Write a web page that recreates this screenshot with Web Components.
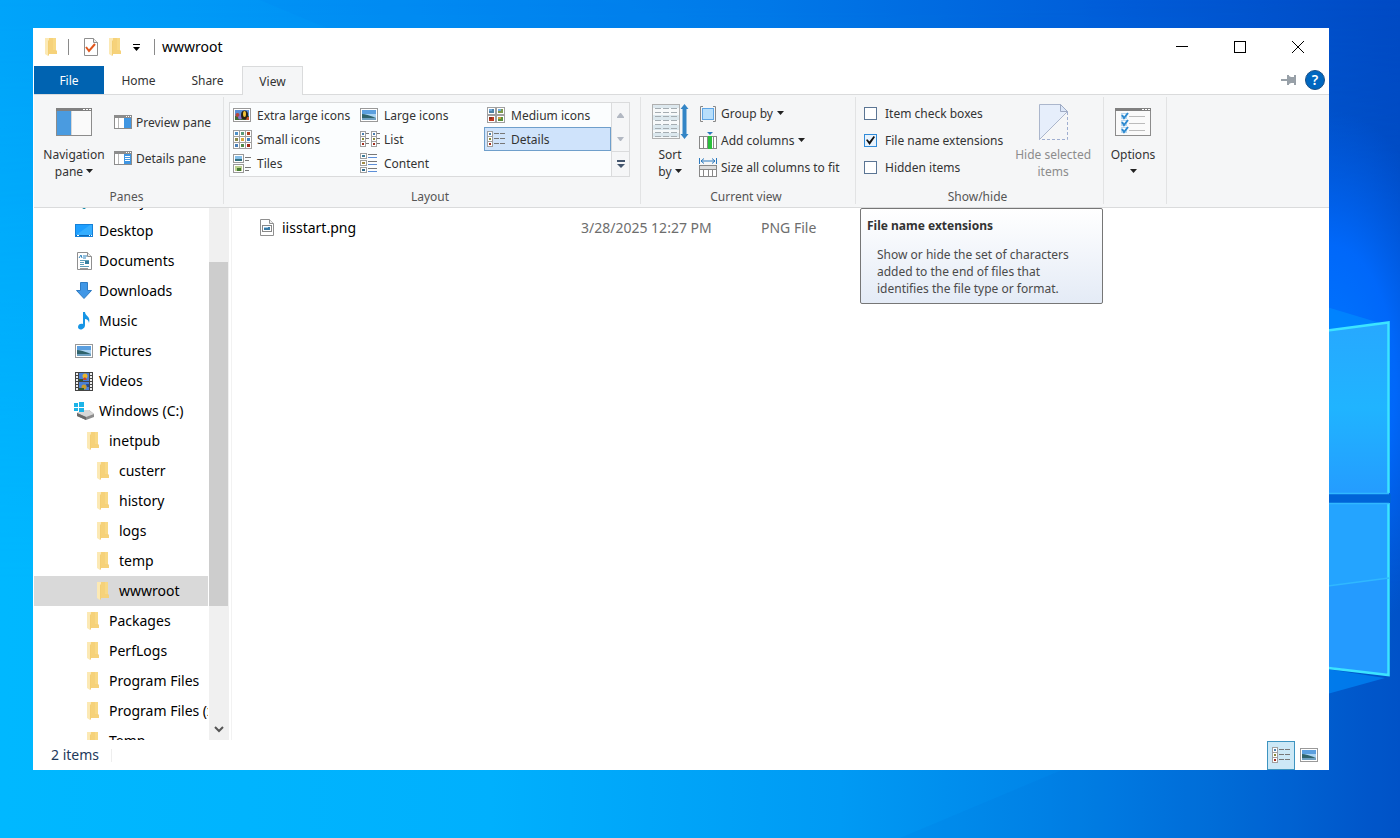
<!DOCTYPE html>
<html lang="en">
<head>
<meta charset="utf-8">
<title>wwwroot</title>
<style>
  html, body { margin: 0; height: 100%; }
  body { font: 12px/17px "Noto Sans", "Open Sans", sans-serif; color: #333; }
</style>
</head>
<body>
<desktop-wallpaper>
  <explorer-window>
    <title-bar slot="title">wwwroot</title-bar>
    <ribbon-tabs slot="tabs"></ribbon-tabs>
    <ribbon-panel slot="ribbon">
      <ribbon-group label="Panes" style="--width:189px">
        <big-command icon="navpane" arrow style="--width:80px">Navigation pane</big-command>
        <command-stack rows="2">
          <small-command icon="preview">Preview pane</small-command>
          <small-command icon="detailspane">Details pane</small-command>
        </command-stack>
      </ribbon-group>
      <ribbon-group label="Layout" style="--width:416px">
        <layout-gallery>
          <gallery-item icon="xlarge">Extra large icons</gallery-item>
          <gallery-item icon="picture">Large icons</gallery-item>
          <gallery-item icon="medium">Medium icons</gallery-item>
          <gallery-item icon="small">Small icons</gallery-item>
          <gallery-item icon="list">List</gallery-item>
          <gallery-item icon="details" selected>Details</gallery-item>
          <gallery-item icon="tiles">Tiles</gallery-item>
          <gallery-item icon="content">Content</gallery-item>
        </layout-gallery>
      </ribbon-group>
      <ribbon-group label="Current view" style="--width:214px">
        <big-command icon="sort" arrow style="--width:58px;--text:36px">Sort by</big-command>
        <command-stack rows="3">
          <small-command icon="group" arrow>Group by</small-command>
          <small-command icon="addcol" arrow>Add columns</small-command>
          <small-command icon="sizecol">Size all columns to fit</small-command>
        </command-stack>
      </ribbon-group>
      <ribbon-group label="Show/hide" style="--width:247px">
        <command-stack rows="3" style="--indent:8px">
          <check-command>Item check boxes</check-command>
          <check-command checked>File name extensions</check-command>
          <check-command>Hidden items</check-command>
        </command-stack>
        <big-command icon="hide" disabled style="--width:100px">Hide selected items</big-command>
        <tool-tip slot="tip" heading="File name extensions">Show or hide the set of characters added to the end of files that identifies the file type or format.</tool-tip>
      </ribbon-group>
      <ribbon-group label="" style="--width:62px">
        <big-command icon="options" arrow style="--width:58px;--text:48px">Options</big-command>
      </ribbon-group>
    </ribbon-panel>
    <nav-tree slot="nav">
      <tree-item icon="objects" level="1">3D Objects</tree-item>
      <tree-item icon="desktop" level="1">Desktop</tree-item>
      <tree-item icon="documents" level="1">Documents</tree-item>
      <tree-item icon="downloads" level="1">Downloads</tree-item>
      <tree-item icon="music" level="1">Music</tree-item>
      <tree-item icon="picture" level="1">Pictures</tree-item>
      <tree-item icon="videos" level="1">Videos</tree-item>
      <tree-item icon="drive" level="1">Windows (C:)</tree-item>
      <tree-item icon="folder" level="2">inetpub</tree-item>
      <tree-item icon="folder" level="3">custerr</tree-item>
      <tree-item icon="folder" level="3">history</tree-item>
      <tree-item icon="folder" level="3">logs</tree-item>
      <tree-item icon="folder" level="3">temp</tree-item>
      <tree-item icon="folder" level="3" selected>wwwroot</tree-item>
      <tree-item icon="folder" level="2">Packages</tree-item>
      <tree-item icon="folder" level="2">PerfLogs</tree-item>
      <tree-item icon="folder" level="2">Program Files</tree-item>
      <tree-item icon="folder" level="2">Program Files (x86)</tree-item>
      <tree-item icon="folder" level="2">Temp</tree-item>
    </nav-tree>
    <file-list slot="files"></file-list>
    <status-bar slot="status">2 items</status-bar>
  </explorer-window>
</desktop-wallpaper>

<script>
const svg = (w, h, body) => `<svg width="${w}" height="${h}" viewBox="0 0 ${w} ${h}" aria-hidden="true">${body}</svg>`;
const rect = (x, y, w, h, fill, extra = '') => `<rect x="${x}" y="${y}" width="${w}" height="${h}" fill="${fill}" ${extra}/>`;
const frame = (x, y, w, h, stroke = '#999', fill = '#fff') => rect(x + .5, y + .5, w - 1, h - 1, fill, `stroke="${stroke}"`);
const landscape = (x, y, w, h) =>
  rect(x, y, w, h, '#a9d3f3') + rect(x, y, w, Math.ceil(h / 3), '#5b9fdf') +
  `<path d="M${x} ${y + h * .4}q${w * .3} 0 ${w} ${h * .4}v${h * .15}h-${w}z" fill="#2f636c"/>` +
  rect(x, y + h - 2, w, 2, '#6e9fc0');
const miniPic = (x, y, color, sky = '#70a9dc') => frame(x, y, 9, 8, '#a0a0a0') + rect(x + 2, y + 2, 5, 4, color) + rect(x + 2, y + 2, 3, 2, sky);
const paneWindow = inner => frame(0, 2, 18, 14, '#8c8c8c') + rect(0, 2, 18, 3, '#8c8c8c') +
  rect(12, 3, 1, 1, '#fff') + rect(14, 3, 1, 1, '#fff') + rect(16, 3, 1, 1, '#fff') + rect(4, 5, 1, 10, '#b8b8b8') + inner;
const bigWindow = inner => frame(0, 4, 36, 28, '#8c8c8c', '#fafafa') + rect(0, 4, 36, 3, '#808080') +
  rect(27, 5, 2, 1, '#fff') + rect(30, 5, 2, 1, '#fff') + rect(33, 5, 2, 1, '#fff') + inner;
const sheet = (x, y, w, h) => `<path d="M${x + .5} ${y + .5}h${w - 5}l4 4v${h - 5}h-${w - 1}z" fill="#fff" stroke="#8f8f8f"/><path d="M${x + w - 4.5} ${y + .5}v4h4" fill="#eee" stroke="#8f8f8f"/>`;

const ICONS = {
  folder: svg(18, 18, '<path d="M5 0h8v12l1 1v3H5z" fill="#f6d27a"/><path d="M10 0h3v12h-3z" fill="#f8d985"/><path d="M2 0h4v16l-1 2-3-2z" fill="#fce9b4"/><path d="M5 3l1-1v15l-1 1z" fill="#f3cf74"/>'),
  objects: svg(18, 18, '<path d="M9 1l7 3v9l-7 4-7-4V4z" fill="#52c3de"/><path d="M9 8v9l7-4V4z" fill="#1791b8"/><path d="M2 13l7 4 7-4-7-1z" fill="#0f7f9d"/>'),
  desktop: svg(18, 18, rect(0, 2, 18, 13, '#1681d8') + rect(1, 3, 16, 10, '#1e9fff') + '<path d="M1 13L15 3h2v10z" fill="#35aeff"/>' + rect(1, 13, 16, 1, '#0f69b7') + rect(2, 13, 2, 1, '#fff') + rect(14, 13, 1, 1, '#fff') + rect(16, 13, 1, 1, '#fff')),
  documents: svg(18, 18, sheet(2, 0, 15, 18) + '<path d="M4 6l2-3 1 3M8 4h4M8 6h3" stroke="#2f83bd" fill="none"/>' + [8, 10, 12, 14].map(y => rect(5, y, 9, 1, '#5e9fba')).join('') + rect(9, 9, 5, 4, '#fff') + rect(10, 9, 4, 3, '#347ea0') + rect(5, 16, 8, 1, '#999')),
  downloads: svg(18, 18, '<path d="M5.500 .5h7v8h4L9 16.500 1.500 8.500h4z" fill="#4197e6" stroke="#2f7cc4"/>'),
  music: svg(18, 18, '<path d="M8 0h2c0 4 6 4 4 11-.5-3-2-4-4-4v6c0 5-7 6-7 2 0-3 3-4 5-3z" fill="#1695e5"/>'),
  picture: svg(18, 18, frame(0, 2, 18, 14, '#999') + landscape(2, 4, 14, 10)),
  videos: svg(18, 19, rect(0, 0, 18, 19, '#444') + [1, 4, 7, 10, 13, 16].map(y => rect(1, y, 2, 2, '#eee') + rect(15, y, 2, 2, '#eee')).join('') + rect(4, 1, 10, 8, '#4a7fd5') + rect(4, 10, 10, 8, '#4a7fd5') + '<circle cx="10" cy="4" r="2.500" fill="#e8b52d"/><path d="M7 8l3-3 2 3z" fill="#c4402d"/><path d="M4 7h4v2H4z" fill="#2f5b35"/><circle cx="9" cy="15" r="2.500" fill="#c79c2c"/><path d="M4 16h5v2H4z" fill="#2f5b35"/><path d="M11 12h3v3h-2z" fill="#274a8a"/>'),
  drive: svg(20, 18, '<path d="M2 11l6-3h6l5 4v3l-8 3-9-4z" fill="#8c8c8c"/><path d="M2 11l6-3h6l5 4-8 3z" fill="#d7d7d7"/><path d="M2 11l9 4v3l-9-4z" fill="#6a6a6a"/>' + rect(-1, 1, 4, 4, '#1cb4e8') + rect(4, 0, 5, 5, '#1cb4e8') + rect(-1, 6, 4, 3, '#1cb4e8') + rect(4, 6, 5, 4, '#1cb4e8')),
  check: svg(16, 18, sheet(1, 0, 14, 18) + '<path d="M3 9l3 4 6-7" fill="none" stroke="#e0561c" stroke-width="2"/>'),
  file: svg(15, 18, sheet(0, 0, 14, 17) + frame(2, 6, 10, 7, '#888') + rect(4, 8, 6, 3, '#3a7ba6') + rect(4, 8, 4, 1, '#9cc9ea')),
  html: svg(15, 18, rect(3, 13, 8, 4, '#1b76b5')),
  navpane: svg(36, 36, bigWindow(rect(1, 7, 14, 24, '#4a9be0') + rect(15, 7, 1, 24, '#d7d7d7'))),
  preview: svg(18, 18, paneWindow(rect(10, 5, 7, 10, '#4096e2'))),
  detailspane: svg(18, 18, paneWindow(rect(10, 5, 7, 10, '#4096e2') + [7, 9, 11].map(y => rect(11, y, 5, 1, '#fff')).join(''))),
  xlarge: svg(18, 18, frame(0, 2, 18, 14) + rect(2, 4, 14, 10, '#5b8fd8') + rect(2, 10, 14, 4, '#3f6b38') + '<circle cx="4.500" cy="9" r="2" fill="#b7443c"/><circle cx="7" cy="11.500" r="2" fill="#8b70d0"/><ellipse cx="11.500" cy="9" rx="3.500" ry="4.500" fill="#2a2216"/><ellipse cx="11.500" cy="8" rx="1.500" ry="3" fill="#f0c33a"/><path d="M14 11h2v3h-3z" fill="#c4522d"/>'),
  medium: svg(18, 18, miniPic(0, 1, '#4d84a8') + miniPic(9, 1, '#7d9a4a') + miniPic(0, 9, '#c03a20', '#90301c') + miniPic(9, 9, '#5d8f3a', '#c8a040')),
  small: svg(19, 19, [0, 1, 2].map(r => [0, 1, 2].map(c => frame(c * 6, r * 6, 7, 7, '#a0a0a0') + rect(c * 6 + 2, r * 6 + 2, 3, 3, [['#4d90c8', '#5a9a78', '#b04020'], ['#8a8a4a', '#d8a840', '#4080c0'], ['#4a80b8', '#508a48', '#a02818']][r][c])).join('')).join('')),
  list: svg(20, 18, [0, 11].map(x => [0, 5, 10].map((y, i) => frame(x, y + 1, 6, 6, '#a0a0a0') + rect(x + 2, y + 3, 2, 2, ['#4a80b0', '#8a8a3a', '#a03020'][i]) + rect(x + 6, y + 3, 3, 1, '#777')).join('')).join('')),
  details: svg(18, 18, [0, 5, 10].map((y, i) => frame(0, y + 1, 6, 6, '#a0a0a0') + rect(2, y + 3, 2, 2, ['#4a80b0', '#8a8a3a', '#a03020'][i]) + rect(7, y + 3, 5, 1, '#777') + rect(13, y + 3, 5, 1, '#777')).join('')),
  tiles: svg(18, 19, frame(0, 0, 11, 9) + rect(2, 2, 7, 5, '#86bfe8') + rect(2, 5, 7, 2, '#33707f') + frame(0, 10, 11, 9) + rect(2, 12, 7, 5, '#bcd090') + rect(4, 14, 4, 3, '#467b31') + rect(12, 3, 6, 1, '#777') + rect(12, 6, 4, 1, '#777') + rect(12, 13, 6, 1, '#777') + rect(12, 16, 4, 1, '#777')),
  content: svg(18, 20, [0, 7, 14].map((y, i) => frame(0, y, 7, 6, '#a0a0a0') + rect(2, y + 2, 3, 2, ['#3e7c99', '#a08b45', '#2f6b8c'][i]) + rect(8, y + 1, 9, 1, '#777') + rect(8, y + 4, 9, 1, '#5d8fd8')).join('')),
  sort: svg(36, 36, frame(0, 0, 28, 35, '#b0b0b0', '#f7f9fa') + rect(1, 1, 26, 3, '#dde8ee') + [[11, 5], [21, 5], [29, 4]].map(([y, h]) => rect(1, y, 26, h, '#dce8ee')).join('') + [4, 8, 12, 16, 20, 24, 28, 32].map(y => rect(3, y, 6, 1, '#a5adb2') + rect(11, y, 6, 1, '#a5adb2') + rect(19, y, 6, 1, '#a5adb2')).join('') + '<path d="M32.500 0l4 5h-2v25h2l-4 5-4-5h2V5h-2z" fill="#3385c6"/>'),
  group: svg(18, 18, '<path d="M4 1.500H1.500v15H4M14 1.500h2.500v15H14" fill="none" stroke="#888"/>' + frame(3, 3, 12, 12, '#5fa5e4', '#b8dffb')),
  addcol: svg(18, 18, '<path d="M8 0h6l-3 3z" fill="#2b78bd"/>' + frame(0, 4, 18, 13, '#888') + rect(4, 5, 1, 11, '#888') + rect(9, 4, 4, 13, '#2bbf3c') + rect(8, 5, 1, 11, '#888') + rect(14, 5, 1, 11, '#888')),
  sizecol: svg(18, 19, '<path d="M.5 0v6M17.500 0v6M2 3h14M5 .5L2 3l3 2.500M13 .5L16 3l-3 2.500" fill="none" stroke="#2b78bd"/>' + frame(0, 7, 18, 12, '#888') + rect(1, 8, 16, 3, '#ddd') + rect(1, 11, 16, 1, '#888') + [4, 9, 13].map(x => rect(x, 12, 1, 6, '#888')).join('')),
  hide: svg(36, 36, '<path d="M4.500 .5h22v6h6L4.500 35.500z" fill="#e6eefb"/><path d="M4.500 35.500V.5h21l7 7-28 28" fill="none" stroke="#abb6cc"/><path d="M25.500 .5v7h7z" fill="#dce7f8" stroke="#9fabc4"/><path d="M32.500 8v27.500H4.500" fill="none" stroke="#9faed0" stroke-dasharray="3 2"/>'),
  options: svg(36, 36, bigWindow([9, 16, 23].map(y => frame(6, y, 6, 6, '#b9d8f0') + `<path d="M7 ${y + 2}l2 3 4-5" fill="none" stroke="#2d8ad0" stroke-width="2"/>` + rect(14, y + 3, 16, 1, '#bbb')).join(''))),
  pin: svg(16, 12, '<path d="M0 5h6v2H0zM6 1h2v1l2 1h3V1h2v10h-2V9h-3l-2 1v1H6z" fill="#98a0a8"/>'),
  arrow: svg(7, 4, '<path d="M0 0h7L3.500 4z" fill="#222"/>'),
  minimize: svg(12, 12, rect(0, 5, 12, 1, '#000')),
  maximize: svg(12, 12, frame(0, 0, 12, 12, '#000', 'none')),
  close: svg(12, 12, '<path d="M0 0l12 12M12 0L0 12" stroke="#000"/>'),
  quick: svg(8, 8, rect(0, 1, 7, 1, '#000') + '<path d="M0 4h7L3.500 8z" fill="#000"/>'),
  up: svg(7, 5, '<path d="M0 5h7V4L4 0H3L0 4z" fill="#b2b8c2"/>'),
  down: svg(7, 4, '<path d="M0 0h7L4 4H3z" fill="#b2b8c2"/>'),
  more: svg(8, 8, rect(0, 0, 8, 2, '#44566e') + '<path d="M0 4h8L4 8z" fill="#44566e"/>'),
  chevron: svg(10, 8, '<path d="M1 1l4 4 4-4" fill="none" stroke="#555" stroke-width="2"/>')
};

/* Registers an element whose shadow root is built once from its CSS and markup. */
function define(name, css, markup) {
  customElements.define(name, class extends HTMLElement {
    connectedCallback() {
      if (this.shadowRoot) return;
      const t = document.createElement('template');
      t.innerHTML = `<style>:host,*{box-sizing:border-box}button{font:inherit;color:inherit;background:none;border:0;padding:0;margin:0;text-align:left}svg{display:block;flex:none;overflow:visible}${css}</style>${markup(this)}`;
      this.attachShadow({ mode: 'open' }).append(t.content.cloneNode(true));
    }
  });
}
const arrowIf = el => el.hasAttribute('arrow') ? `<span class="arrow">${ICONS.arrow}</span>` : '';

define('desktop-wallpaper', `
  :host{display:grid;position:relative;min-height:100vh;padding:28px 71px 68px 33px;overflow:hidden;background:#0078e8}
  .art{position:absolute;inset:0;width:100%;height:100%}
  ::slotted(*){position:relative}`,
  () => `<svg class="art" viewBox="0 0 1400 838" preserveAspectRatio="xMaxYMid slice" aria-hidden="true">
    <defs>
      <linearGradient id="base" x1="0" y1="0" x2="1400" y2="0" gradientUnits="userSpaceOnUse">
        <stop offset="0" stop-color="#00a4fa"/><stop offset=".25" stop-color="#0090f4"/><stop offset=".55" stop-color="#0078e8"/><stop offset=".8" stop-color="#005cd8"/><stop offset="1" stop-color="#004ac4"/>
      </linearGradient>
      <linearGradient id="floor" x1="0" y1="0" x2="1400" y2="0" gradientUnits="userSpaceOnUse">
        <stop offset="0" stop-color="#00b8ff"/><stop offset=".35" stop-color="#00b0fd"/><stop offset=".6" stop-color="#009af4"/><stop offset=".75" stop-color="#0084e8"/><stop offset=".88" stop-color="#006cd8"/><stop offset="1" stop-color="#0052c8"/>
      </linearGradient>
      <linearGradient id="fade" x1="0" y1="0" x2="0" y2="838" gradientUnits="userSpaceOnUse">
        <stop offset="0" stop-color="#fff" stop-opacity="0"/><stop offset=".7" stop-color="#fff"/>
      </linearGradient>
      <mask id="low"><rect width="1400" height="838" fill="url(#fade)"/></mask>
      <radialGradient id="glow"><stop offset="0" stop-color="#0078ff"/><stop offset=".5" stop-color="#006aff" stop-opacity=".9"/><stop offset="1" stop-color="#0060f0" stop-opacity="0"/></radialGradient>
      <linearGradient id="pane" x1="0" y1="0" x2="0" y2="1"><stop offset="0" stop-color="#27a8ff"/><stop offset=".5" stop-color="#20b4ff"/><stop offset="1" stop-color="#249cff"/></linearGradient>
    </defs>
    <rect width="1400" height="838" fill="url(#base)"/>
    <rect width="1400" height="838" fill="url(#floor)" mask="url(#low)"/>
    <path d="M260 0h340L760 50H380z" fill="#0080f0" opacity=".15"/>
    <path d="M900 838L1300 670l100 0v168z" fill="#0050c8" opacity=".07"/>
    <ellipse cx="1330" cy="380" rx="130" ry="270" fill="url(#glow)"/>
    <path d="M1320 305l60 18-60 8zM1320 668l65 10-65 18z" fill="#0090ff" opacity=".6"/>
    <path d="M1320 331l69-9v172h-69z" fill="url(#pane)"/>
    <path d="M1320 503h69v172l-69-9z" fill="#249bff"/>
    <path d="M1320 503h69v75l-69 9z" fill="#24a4ff"/>
    <path d="M1320 494h71v9h-71z" fill="#0064d8"/>
    <path d="M1320 331.500l68.500-9V493M1388.500 503v172l-68.500-8" fill="none" stroke="#3ce4ff" stroke-width="2.500"/>
    <path d="M1320 493.500h69M1320 503.500h69M1320 587l69-9" fill="none" stroke="#30b8ff" stroke-width="1.500"/>
  </svg><slot></slot>`);

define('explorer-window', `
  :host{display:grid;grid-template-rows:auto auto auto minmax(0,1fr) auto;background:#fff;padding-left:1px;min-width:0}
  .body{display:flex;min-height:0;overflow:hidden;contain:size}
  ::slotted([slot=files]){flex:1}
  ::slotted([slot=ribbon]){z-index:1}`,
  () => `<slot name="title"></slot><slot name="tabs"></slot><slot name="ribbon"></slot>
    <main class="body"><slot name="nav"></slot><slot name="files"></slot></main><slot name="status"></slot>`);

define('title-bar', `
  :host{display:flex;align-items:center;height:38px;padding:0 2px 0 9px;color:#000;font-size:14px;line-height:20px}
  .rule{width:1px;height:16px;background:#8a8a8a}
  .first{margin:0 14px 0 7px}.last{margin:0 7px 0 13px}
  .folder,.menu{margin-left:8px}
  .controls{display:flex;margin-left:auto}
  .controls button{display:grid;place-items:center;width:58px;height:38px}`,
  () => `${ICONS.folder}<span class="rule first"></span>
    <button aria-label="Properties">${ICONS.check}</button>
    <button class="folder" aria-label="New folder">${ICONS.folder}</button>
    <button class="menu" aria-label="Customize toolbar">${ICONS.quick}</button>
    <span class="rule last"></span><slot></slot>
    <div class="controls"><button aria-label="Minimize">${ICONS.minimize}</button><button aria-label="Maximize">${ICONS.maximize}</button><button aria-label="Close">${ICONS.close}</button></div>`);

define('ribbon-tabs', `
  :host{display:flex;align-items:stretch;height:29px;border-bottom:1px solid #dadbdc}
  .tab{width:69px;text-align:center}
  .file{width:70px;background:#0063b1;color:#fff}
  .on{width:61px;background:#f5f6f7;border:1px solid #dadbdc;border-bottom:0;margin-bottom:-1px}
  .tools{display:flex;align-items:center;gap:8px;margin-left:auto;padding-right:4px}
  .help{width:20px;height:20px;border-radius:50%;background:#0067c0;border:1px solid #1a4f86;color:#fff;font-size:14px;font-weight:600;line-height:18px;text-align:center}`,
  () => `<button class="tab file">File</button><button class="tab">Home</button><button class="tab">Share</button><button class="tab on">View</button>
    <div class="tools"><button aria-label="Pin the ribbon">${ICONS.pin}</button><button class="help">?</button></div>`);

define('ribbon-panel', `
  :host{display:flex;background:#f5f6f7;border-bottom:1px solid #dadbdc}
  ::slotted(*){flex:none}`, () => `<slot></slot>`);

define('ribbon-group', `
  :host{display:flex;flex-direction:column;position:relative;box-sizing:content-box;width:var(--width);margin:2px 0 3px;border-right:1px solid #e2e3e4}
  .body{display:flex;height:92px}
  .label{height:15px;line-height:15px;text-align:center;color:#555;padding-right:4px}`,
  el => `<div class="body"><slot></slot></div><div class="label">${el.getAttribute('label')}</div><slot name="tip"></slot>`);

define('big-command', `
  :host{display:block;width:var(--width);padding-top:7px}
  button{display:flex;flex-direction:column;align-items:center;gap:6px;width:100%}
  button:disabled{color:#8c8c8c}
  .text{text-align:center;max-width:var(--text,82px)}
  .arrow{display:inline-block;vertical-align:middle;padding-bottom:3px}`,
  el => `<button ${el.hasAttribute('disabled') ? 'disabled' : ''}>${ICONS[el.getAttribute('icon')]}<span class="text"><slot></slot>${el.hasAttribute('arrow') ? ' ' : ''}${arrowIf(el)}</span></button>`);

define('command-stack', `
  :host{display:flex;flex-direction:column;padding:3px 0 0 var(--indent,0)}
  :host([rows="2"]){padding-top:7px}
  :host([rows="2"]) ::slotted(*){height:36px}
  ::slotted(*){height:27px}`, () => `<slot></slot>`);

define('small-command', `
  :host{display:flex}
  button{display:flex;align-items:center;gap:4px;white-space:nowrap}
  .arrow{padding-bottom:2px}`,
  el => `<button>${ICONS[el.getAttribute('icon')]}<slot></slot>${arrowIf(el)}</button>`);

define('check-command', `
  :host{display:flex}
  label{display:flex;align-items:center;gap:8px;white-space:nowrap}
  input{appearance:none;display:grid;place-items:center;width:13px;height:13px;margin:0;border:1px solid #5b7594;background:#fff}
  input:checked{border-color:#2f8ad8;background:#e8f3fd}
  input:checked::before{content:"";width:9px;height:9px;background:#111;clip-path:polygon(0 45%,15% 35%,38% 62%,85% 0,100% 12%,40% 100%)}`,
  el => `<label><input type="checkbox" ${el.hasAttribute('checked') ? 'checked' : ''}><slot></slot></label>`);

define('layout-gallery', `
  :host{display:flex;margin:5px 0 0 5px;height:75px}
  .grid{display:grid;grid-template-columns:repeat(3,127px);grid-template-rows:repeat(3,24px);background:#fbfdfe;border:1px solid #dadbdc}
  .side{display:grid;grid-template-rows:24px 24px 25px;width:18px;border:1px solid #dadbdc;border-left:0}
  .side button{display:grid;place-items:center}
  .side button:last-child{border-top:1px solid #dadbdc}`,
  () => `<div class="grid"><slot></slot></div><div class="side"><button aria-label="Scroll up" disabled>${ICONS.up}</button><button aria-label="Scroll down" disabled>${ICONS.down}</button><button aria-label="More layouts">${ICONS.more}</button></div>`);

define('gallery-item', `
  :host{display:block}
  button{display:flex;align-items:center;width:100%;height:24px;padding-left:2px;border:1px solid transparent;white-space:nowrap}
  .icon{width:24px}
  :host([selected]) button{background:#cfe3fb;border-color:#6f9fcb}`,
  el => `<button aria-pressed="${el.hasAttribute('selected')}"><span class="icon">${ICONS[el.getAttribute('icon')]}</span><slot></slot></button>`);

define('tool-tip', `
  :host{display:block;position:absolute;z-index:5;top:111px;left:4px;width:243px;padding:8px 16px 6px 16px;border:1px solid #767676;border-radius:2px;background:linear-gradient(#fff,#e4ebf6);color:#4a4a4a}
  b{display:block;margin:0 0 12px -10px;color:#333}`,
  el => `<b>${el.getAttribute('heading')}</b><slot></slot>`);

define('nav-tree', `
  :host{display:flex;width:198px;border-right:1px solid #f2f2f2;color:#000;font-size:14px;line-height:20px}
  nav{width:174px;overflow:hidden}
  .rows{margin-top:-22px}
  .bar{display:grid;grid-template-rows:54fr 344fr 134fr;width:20px;margin-left:1px;background:#f0f0f0}
  .thumb{background:#cdcdcd;margin-right:1px}
  .after{display:flex;align-items:flex-end;justify-content:center;padding:0 1px 6px 0}`,
  () => `<nav><div class="rows"><slot></slot></div></nav><div class="bar"><span></span><span class="thumb"></span><span class="after">${ICONS.chevron}</span></div>`);

define('tree-item', `
  :host{display:block}
  a{display:flex;align-items:center;height:30px;padding-left:41px;color:inherit;text-decoration:none;white-space:nowrap}
  :host([level="2"]) a{padding-left:51px}
  :host([level="3"]) a{padding-left:61px}
  :host([selected]) a{background:#d9d9d9}
  .icon{width:24px;flex:none}`,
  el => `<a href="#"><span class="icon">${ICONS[el.getAttribute('icon')]}</span><slot></slot></a>`);

define('file-list', `
  :host{display:block;overflow:hidden;color:#6d6d6d;font-size:14px;line-height:20px}
  table{width:100%;table-layout:fixed;border-collapse:collapse;margin-top:-25px}
  td{height:30px;padding:0;white-space:nowrap}
  .name{width:349px}.date{width:180px}
  .name div{display:flex;align-items:center;gap:7px;padding-left:28px;color:#000}`,
  () => `<table aria-label="Files">
    <tr><td class="name"><div>${ICONS.html}</div></td><td class="date"></td><td></td></tr>
    <tr><td class="name"><div>${ICONS.file}iisstart.png</div></td><td class="date">3/28/2025 12:27 PM</td><td>PNG File</td></tr></table>`);

define('status-bar', `
  :host{display:flex;align-items:center;height:30px;padding:0 11px 0 17px;color:#1e395b;font-size:14px;line-height:20px}
  .rule{width:1px;height:13px;margin-left:12px;background:#eee}
  .views{display:flex;align-items:center;gap:5px;margin-left:auto}
  button{display:grid;place-items:center;height:29px}
  .on{width:28px;background:#cce8f6;border:1px solid #3d94c0}`,
  () => `<slot></slot><span class="rule"></span><div class="views"><button class="on" aria-label="Details view">${ICONS.details}</button><button aria-label="Large icons view">${ICONS.picture}</button></div>`);
</script>
</body>
</html>
